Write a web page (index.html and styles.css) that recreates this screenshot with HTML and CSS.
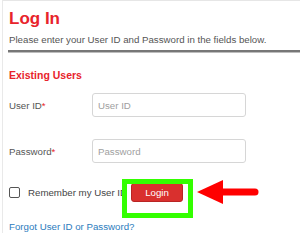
FILE: index.html
```html
<!DOCTYPE html>
<html lang="en">
<head>
<meta charset="utf-8">
<title>Log In</title>
<link rel="stylesheet" href="styles.css">
</head>
<body>
<div class="panel">
  <h1 class="title">Log In</h1>
  <p class="intro">Please enter your User ID and Password in the fields below.</p>
  <div class="rule"></div>
  <h2 class="section">Existing Users</h2>
  <div class="field first">
    <label class="label">User ID<span class="req">*</span></label>
    <input class="input" type="text" placeholder="User ID">
  </div>
  <div class="field">
    <label class="label">Password<span class="req">*</span></label>
    <input class="input" type="password" placeholder="Password">
  </div>
  <div class="actions">
    <span class="check"></span>
    <span class="remember">Remember my User ID</span>
    <button class="btn" type="button">Login</button>
    <span class="highlight"></span>
    <svg class="arrow" width="62" height="26" viewBox="0 0 62 26">
      <polygon points="0,12 26,0 26,24" fill="#ff0000"/>
      <line x1="24" y1="12" x2="58" y2="12" stroke="#ff0000" stroke-width="7" stroke-linecap="round"/>
    </svg>
  </div>
  <a class="forgot" href="#">Forgot User ID or Password?</a>
</div>
</body>
</html>
```
FILE: styles.css
```css
html, body {
  margin: 0;
  padding: 0;
  background: #ffffff;
}
body {
  font-family: "Liberation Sans", Arial, sans-serif;
  width: 300px;
  height: 233px;
  overflow: hidden;
}
.panel {
  box-sizing: border-box;
  height: 233px;
  margin-left: 2px;
  border-top: 1px solid #e6e6e6;
  border-left: 1px solid #e9e9e9;
  padding: 8px 0 0 6px;
}
.title {
  margin: 0;
  font-size: 17px;
  line-height: 20px;
  font-weight: bold;
  color: #e8232b;
}
.intro {
  margin: 5px 0 0;
  font-size: 9.7px;
  line-height: 12px;
  color: #555555;
  white-space: nowrap;
}
.rule {
  margin: 4px 0 0 -1px;
  height: 0;
  border-top: 2px solid #777777;
  border-bottom: 1px solid #bdbdbd;
}
.section {
  margin: 15px 0 0;
  font-size: 10.5px;
  line-height: 14px;
  font-weight: bold;
  color: #e8232b;
}
.field {
  display: flex;
  align-items: center;
  margin-top: 22px;
}
.field.first {
  margin-top: 11px;
}
.label {
  width: 83px;
  font-size: 9.7px;
  color: #555555;
}
.req {
  color: #e8232b;
}
.input {
  box-sizing: border-box;
  width: 154px;
  height: 24px;
  margin: 0;
  border: 1px solid #d6d6d6;
  border-radius: 3px;
  padding: 0 5px;
  font-family: "Liberation Sans", Arial, sans-serif;
  font-size: 9.7px;
  color: #555555;
  background: #ffffff;
  outline: none;
}
.input::placeholder {
  color: #a0a0a0;
}
.actions {
  position: relative;
  display: flex;
  align-items: center;
  margin-top: 20px;
  height: 19px;
}
.check {
  box-sizing: border-box;
  width: 11px;
  height: 11px;
  border: 1px solid #555555;
  border-radius: 2px;
  background: #ffffff;
}
.remember {
  width: 103px;
  margin-left: 8px;
  font-size: 9.7px;
  color: #444444;
  white-space: nowrap;
}
.btn {
  box-sizing: border-box;
  width: 52px;
  height: 19px;
  margin: 0;
  padding: 0;
  border: 1px solid #b92424;
  border-radius: 3px;
  background: #d9302e;
  color: #ffffff;
  font-family: "Liberation Sans", Arial, sans-serif;
  font-size: 9.7px;
  line-height: 17px;
}
.highlight {
  position: absolute;
  left: 113px;
  top: -4px;
  width: 71px;
  height: 39px;
  box-sizing: border-box;
  border: 5px solid #33ff00;
}
.arrow {
  position: absolute;
  left: 188px;
  top: -3px;
}
.forgot {
  display: block;
  margin-top: 19px;
  font-size: 9.7px;
  line-height: 12px;
  color: #2b7bbd;
  text-decoration: none;
}
```
